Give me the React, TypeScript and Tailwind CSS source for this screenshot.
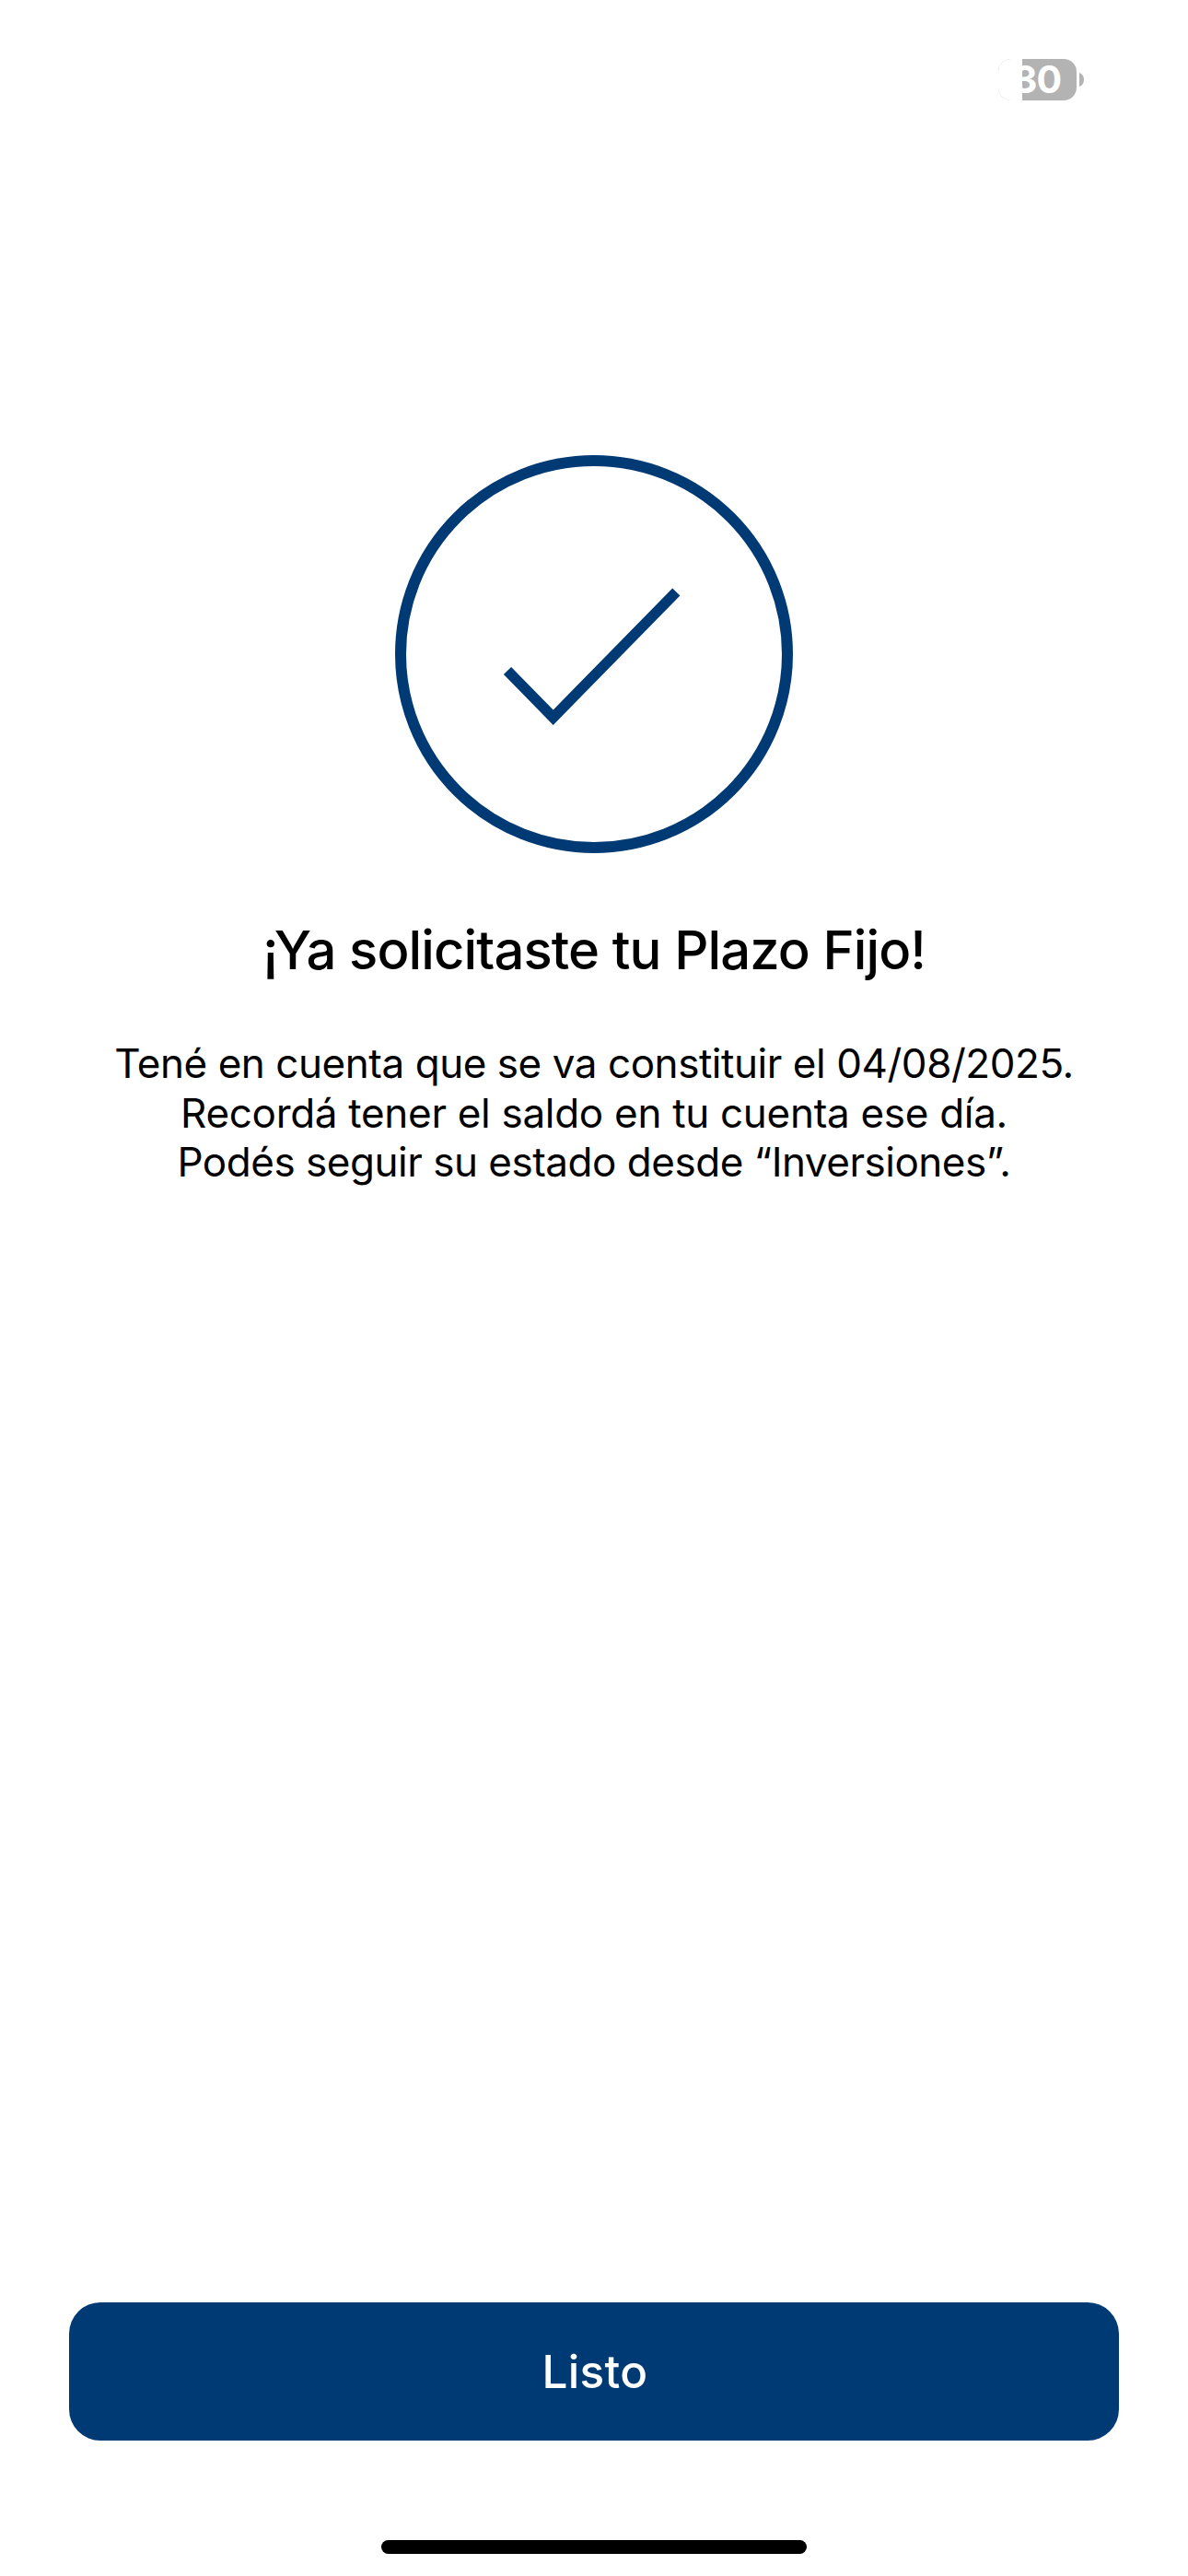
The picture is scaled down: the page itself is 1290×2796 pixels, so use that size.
interface BatteryIndicatorProps {
  level: number;
}

function BatteryIndicator({ level }: BatteryIndicatorProps) {
  return (
    <div className="flex items-center gap-[3px]">
      <div className="relative flex h-[45px] w-[85px] items-center justify-center rounded-[14px] bg-[#b3b3b3]">
        <div
          className="absolute inset-y-0 left-0 rounded-l-[14px] bg-white"
          style={{ width: `${level + 0.6}%` }}
        />
        <span className="relative pr-px text-[41px] leading-none font-bold tracking-[-1px] text-white">
          {level}
        </span>
      </div>
      <svg width="5" height="15" viewBox="0 0 5 15" className="fill-[#b3b3b3]">
        <path d="M0 0C3 1 5 4 5 7.5S3 14 0 15Z" />
      </svg>
    </div>
  );
}

function SuccessIcon() {
  return (
    <svg width="432" height="432" viewBox="0 0 432 432" fill="none" className="stroke-[#003a74]">
      <circle cx="216" cy="216" r="210" strokeWidth="12" />
      <path d="M122 234L171.7 284.7L305.3 148.5" strokeWidth="11.5" />
    </svg>
  );
}

export default function App() {
  return (
    <div className="flex h-[2796px] w-[1290px] flex-col bg-white font-['Inter','Liberation_Sans',sans-serif] text-black">
      {/* Status bar */}
      <header className="flex h-[177px] shrink-0 items-start justify-end pt-16 pr-[113px]">
        <BatteryIndicator level={30} />
      </header>

      <main className="flex flex-1 flex-col items-center pt-[317px]">
        <SuccessIcon />
        <h1 className="mt-[69px] text-[58px] leading-[72px] font-medium tracking-[-0.9px] whitespace-nowrap">
          ¡Ya solicitaste tu Plazo Fijo!
        </h1>
        <div className="mt-[61px] text-center text-[44px] leading-[53.5px] whitespace-nowrap">
          <p className="tracking-[-0.45px]">Tené en cuenta que se va constituir el 04/08/2025.</p>
          <p className="tracking-[-0.3px]">Recordá tener el saldo en tu cuenta ese día.</p>
          <p className="tracking-[-0.48px]">Podés seguir su estado desde “Inversiones”.</p>
        </div>
      </main>

      <footer className="flex shrink-0 flex-col items-center px-[75px] pb-6">
        <button
          type="button"
          className="h-[150px] w-full rounded-[34px] bg-[#003a74] pl-0.5 text-[49.5px] font-medium tracking-[0.3px] text-white"
        >
          Listo
        </button>
        {/* Home indicator */}
        <div className="mt-[108px] h-[15px] w-[462px] rounded-full bg-black" />
      </footer>
    </div>
  );
}
